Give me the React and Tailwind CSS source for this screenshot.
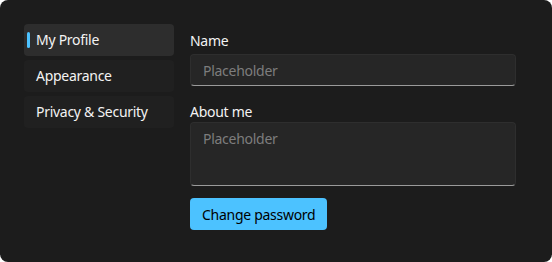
import React, { useState } from 'react';

const navItems = ['My Profile', 'Appearance', 'Privacy & Security'];

const App = () => {
  const [active, setActive] = useState('My Profile')

  return (
    <div className="w-[552px] h-[262px] bg-white" style={{ fontFamily: '"Noto Sans", "Segoe UI", sans-serif' }}>
      <div className="w-full h-full bg-[#1c1c1c] rounded-lg flex text-[14px] tracking-[-0.02em] text-[#f3f3f3]">

        {/* sidebar */}
        <div className="w-[150px] ml-6 mt-6 flex flex-col gap-1">
          {navItems.map((item) => (
            <button
              key={item}
              onClick={() => setActive(item)}
              className={`relative h-8 rounded-[4px] text-left pl-3 leading-8 ${active === item ? 'bg-[#2d2d2d]' : 'bg-[#202020]'}`}
            >
              {active === item && (
                <span className="absolute left-[3px] top-2 w-[3px] h-4 rounded-full bg-[#4cc2ff]"></span>
              )}
              {item}
            </button>
          ))}
        </div>

        {/* form */}
        <div className="flex-1 ml-4 mr-9 pt-[31px] flex flex-col">
          <label className="h-5 leading-5 mb-[3px]">Name</label>
          <input
            placeholder="Placeholder"
            className="h-8 px-3 rounded-[4px] bg-[#262626] border border-[#2e2e2e] border-b-[#9a9a9a] text-[#f3f3f3] placeholder:text-[#7d7d7d] outline-none"
          />

          <label className="h-5 leading-5 mt-4">About me</label>
          <textarea
            placeholder="Placeholder"
            className="h-16 px-3 py-[5px] rounded-[4px] bg-[#262626] border border-[#2e2e2e] border-b-[#9a9a9a] text-[#f3f3f3] placeholder:text-[#7d7d7d] outline-none resize-none"
          />

          <div className="mt-3">
            <button className="h-8 px-3 rounded-[4px] bg-[#4cc2ff] text-black">Change password</button>
          </div>
        </div>
      </div>
    </div>
  )
}

export default App
